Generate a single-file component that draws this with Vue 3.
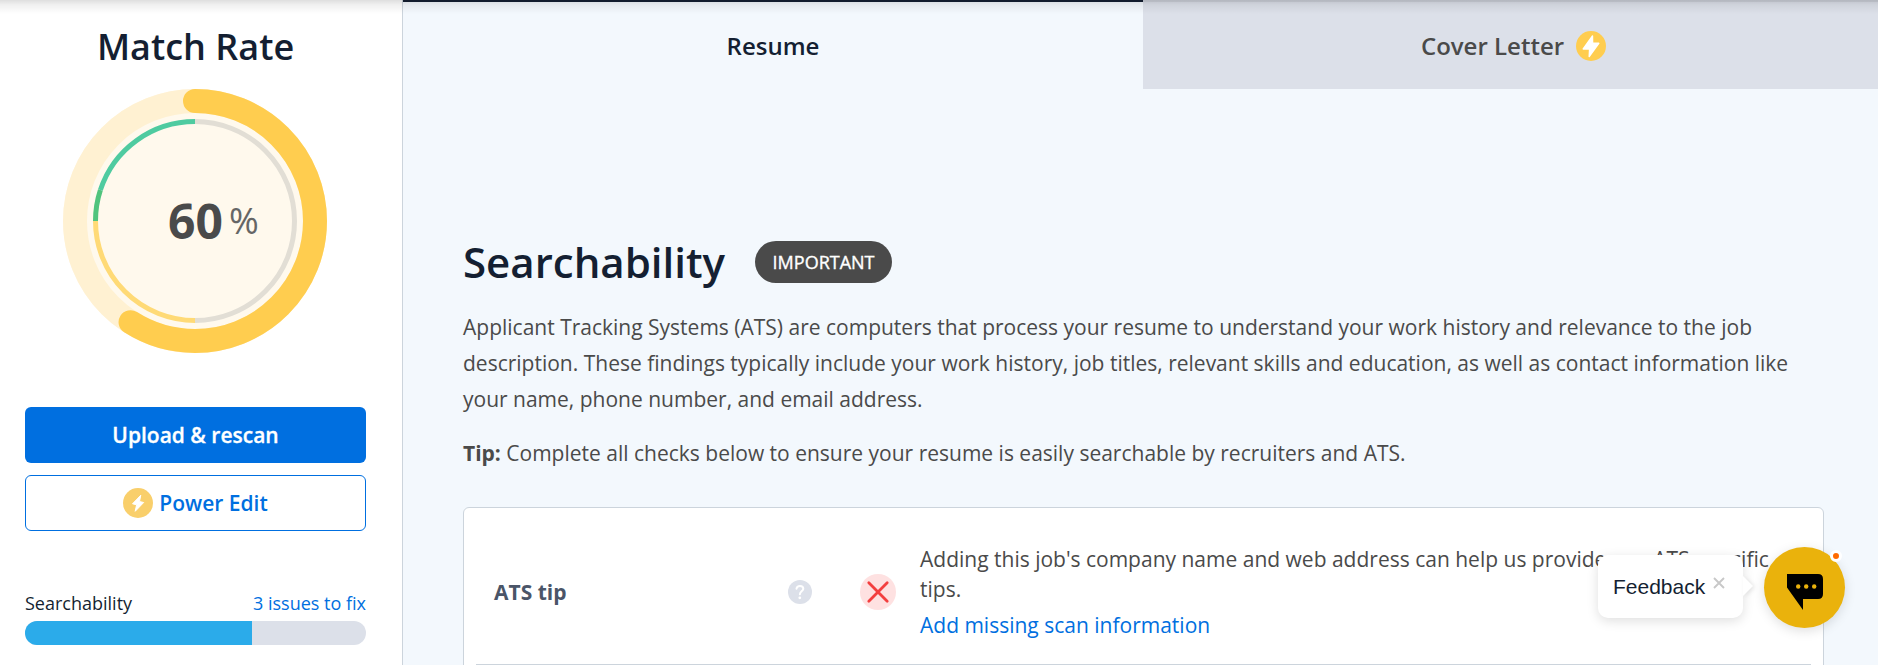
<script setup>
const matchRate = 60
const checksPassed = 66.6
const ring = 2 * Math.PI * 120
const ringLength = ring * 0.59
</script>

<template>
  <div class="page">
    <aside class="sidebar">
      <h2 class="rate-title"><span>Match Rate</span></h2>
      <div class="gauge">
        <svg width="264" height="264" viewBox="0 0 264 264">
          <circle cx="132" cy="132" r="132" fill="#fff9ed" />
          <circle cx="132" cy="132" r="120" fill="none" stroke="#fff1d2" stroke-width="24" />
          <path d="M132 32.5A99.5 99.5 0 0 1 132 231.500" fill="none" stroke="#e2ded5" stroke-width="5" />
          <path d="M132 231.500A99.500 99.500 0 0 1 32.500 132" fill="none" stroke="#ffda76" stroke-width="5" />
          <path d="M32.500 132A99.500 99.500 0 0 1 37.400 101" fill="none" stroke="#50c47d" stroke-width="5" />
          <path d="M37.400 101A99.500 99.500 0 0 1 132 32.500" fill="none" stroke="#4fcba0" stroke-width="5" />
          <circle cx="132" cy="132" r="120" fill="none" stroke="#ffcd4f" stroke-width="24" stroke-linecap="round"
            :stroke-dasharray="`${ringLength} ${ring}`" transform="rotate(-90 132 132)" />
        </svg>
        <div class="gauge-label"><b>{{ matchRate }}</b><span>%</span></div>
      </div>
      <button class="btn primary"><span>Upload &amp; rescan</span></button>
      <button class="btn outline">
        <svg width="30" height="30" viewBox="0 0 30 30">
          <circle cx="15" cy="15" r="15" fill="#f9cf6b" />
          <path d="M17.800 7.200L9.500 15.800L13.600 16.800L12.200 23.300L20.700 14.500L16.500 13.500Z" fill="#fff" stroke="#fff" stroke-width="1" stroke-linejoin="round" />
        </svg>
        <span>Power Edit</span>
      </button>
      <div class="metric">
        <span class="metric-name">Searchability</span>
        <a class="metric-link">3 issues to fix</a>
      </div>
      <div class="bar"><div class="bar-fill" :style="{ width: checksPassed + '%' }"></div></div>
    </aside>

    <main class="main">
      <nav class="tabs">
        <div class="tab active"><span>Resume</span></div>
        <div class="tab locked">
          <span>Cover Letter</span>
          <svg width="30" height="30" viewBox="0 0 30 30">
            <circle cx="15" cy="15" r="15" fill="#ffcd4f" />
            <path d="M16.500 5L7.200 18H13.600L13.200 25.500L22.800 12.300H16.600Z" fill="#fff" stroke="#fff" stroke-width="1.400" stroke-linejoin="round" />
          </svg>
        </div>
      </nav>
      <section class="content">
        <header class="heading">
          <h1><span>Searchability</span></h1>
          <span class="pill"><span>IMPORTANT</span></span>
        </header>
        <p class="intro">Applicant Tracking Systems (ATS) are computers that process your resume to understand your work history and relevance to the job<br>description. These findings typically include your work history, job titles, relevant skills and education, as well as contact information like<br>your name, phone number, and email address.</p>
        <p class="tip"><b>Tip:</b> Complete all checks below to ensure your resume is easily searchable by recruiters and ATS.</p>
        <div class="card">
          <div class="row">
            <span class="row-name">ATS tip</span>
            <svg class="help" width="24" height="24" viewBox="0 0 24 24">
              <circle cx="12" cy="12" r="12" fill="#dce0e9" />
              <path d="M8.500 8.700C8.800 6.800 10.100 5.900 12 5.900C14 5.900 15.300 7 15.300 8.700C15.300 10.900 12.100 11.200 11.900 14.300" fill="none" stroke="#fff" stroke-width="2" stroke-linecap="round" />
              <circle cx="11.800" cy="17.800" r="1.400" fill="#fff" />
            </svg>
            <svg class="fail" width="36" height="36" viewBox="0 0 36 36">
              <circle cx="18" cy="18" r="18" fill="#fee1e1" />
              <path d="M8.800 8.800L27.200 27.200M27.200 8.800L8.800 27.200" stroke="#f33f3f" stroke-width="2.800" stroke-linecap="round" />
            </svg>
            <div class="row-text">
              <p>Adding this job's company name and web address can help us provide you ATS-specific<br>tips.</p>
              <a>Add missing scan information</a>
            </div>
          </div>
        </div>
      </section>
    </main>

    <div class="top-shadow"></div>

    <div class="feedback">
      <span>Feedback</span>
      <svg width="12" height="12" viewBox="0 0 12 12"><path d="M1 1L11 11M11 1L1 11" stroke="#c8c8c8" stroke-width="1.900" /></svg>
    </div>
    <div class="chat">
      <svg width="36" height="36" viewBox="0 0 36 36">
        <path d="M0 0H31Q36 0 36 5V20Q36 25 31 25H16V36L0 13.500Z" fill="#000" />
        <circle cx="11.200" cy="12.500" r="2.200" fill="#eab20c" />
        <circle cx="19.200" cy="12.500" r="2.200" fill="#eab20c" />
        <circle cx="27.200" cy="12.500" r="2.200" fill="#eab20c" />
      </svg>
      <i class="dot"></i>
    </div>
  </div>
</template>

<style>
html, body { margin: 0; overflow: hidden; }
</style>

<style scoped>
* { box-sizing: border-box; }
.page {
  position: relative;
  display: flex;
  width: 1878px;
  height: 665px;
  overflow: hidden;
  background: #f3f8fd;
  color: #4a4a4a;
  font-family: "Open Sans", "Noto Sans", sans-serif;
}
h1, h2, p { margin: 0; }
.sidebar {
  width: 403px;
  flex: none;
  padding: 0 36px 0 25px;
  background: #fff;
  border-right: 1px solid #ccd4dc;
}
.rate-title {
  height: 89px;
  padding-top: 22px;
  line-height: 49px;
  font-size: 36px;
  font-weight: 600;
  text-align: center;
  color: #141f32;
}
.gauge {
  position: relative;
  width: 264px;
  height: 264px;
  margin: 0 0 54px 38px;
}
.gauge svg { display: block; }
.gauge-label {
  position: absolute;
  left: 105px;
  top: 99px;
  display: flex;
  line-height: 66px;
}
.gauge-label b { font-size: 48px; font-weight: 700; }
.gauge-label span { font-size: 36px; color: #666; margin-left: 6px; }
.btn {
  display: flex;
  align-items: center;
  justify-content: center;
  width: 341px;
  height: 56px;
  padding: 0;
  border: 0;
  border-radius: 6px;
  font: 600 21px "Open Sans", sans-serif;
}
.primary { background: #006fe0; color: #fff; -webkit-text-stroke: 0.3px #fff; }
.outline {
  margin-top: 12px;
  gap: 6px;
  border: 1px solid #006fe0;
  background: #fff;
  color: #006fe0;
}
.metric {
  display: flex;
  justify-content: space-between;
  width: 341px;
  margin-top: 58px;
  line-height: 28px;
  font-size: 18px;
}
.metric-name { color: #141f32; }
.metric-link { color: #006fe0; }
.bar {
  width: 341px;
  height: 24px;
  margin-top: 4px;
  border-radius: 12px;
  background: #dce0e9;
  overflow: hidden;
}
.bar-fill { height: 100%; background: #2babea; }
.main { flex: 1; }
.tabs { display: flex; height: 89px; }
.tab {
  display: flex;
  flex: 1;
  align-items: center;
  justify-content: center;
  gap: 12px;
  padding-top: 1px;
  border-top: 2px solid #ced2db;
  background: #dce0e9;
  font-size: 24px;
  font-weight: 600;
}
.tab.active {
  flex: none;
  width: 740px;
  background: none;
  border-top-color: #141f32;
  color: #141f32;
}
.tab.locked { padding-left: 6px; }
.tab span { margin-top: -2px; }
.content { width: 1361px; margin-left: 60px; }
.heading {
  display: flex;
  align-items: center;
  height: 72px;
  margin-top: 137px;
}
h1 {
  font-size: 42px;
  font-weight: 600;
  line-height: 72px;
  color: #141f32;
}
.pill {
  display: flex;
  align-items: center;
  justify-content: center;
  width: 137px;
  height: 42px;
  margin-left: 30px;
  border-radius: 21px;
  background: #4a4a4a;
  color: #fff;
  font-size: 18px;
  font-weight: 400;
  -webkit-text-stroke: 0.35px #fff;
}
.intro, .tip { font-size: 21px; line-height: 36px; white-space: nowrap; }
.intro { margin-top: 11px; }
.tip { margin-top: 18px; }
.card {
  height: 180px;
  margin-top: 36px;
  padding: 0 12px;
  border: 1px solid #ccd4dc;
  border-radius: 6px;
  background: #fff;
}
.row {
  display: flex;
  align-items: center;
  height: 157px;
  padding: 12px 0 0 18px;
  border-bottom: 1px solid #ccd4dc;
}
.row-name {
  width: 294px;
  font-size: 21px;
  font-weight: 700;
  color: #4a5568;
}
.fail { margin-left: 48px; }
.row-text {
  margin-left: 24px;
  padding-top: 6px;
  font-size: 21px;
  line-height: 30px;
  white-space: nowrap;
}
.row-text a { display: block; line-height: 42px; color: #006fe0; }
.top-shadow {
  position: absolute;
  inset: 0 0 auto;
  height: 14px;
  background: linear-gradient(rgba(0, 0, 0, 0.13), rgba(0, 0, 0, 0.06) 35%, rgba(0, 0, 0, 0));
}
.feedback {
  position: absolute;
  left: 1598px;
  top: 555px;
  display: flex;
  width: 145px;
  height: 63px;
  padding: 20px 0 0 15px;
  border-radius: 10px;
  background: #fff;
  box-shadow: 0 3px 12px rgba(0, 0, 0, 0.13);
  color: #141f32;
  font: 21px/24px "Liberation Sans", sans-serif;
}
.feedback svg { margin: 2px 0 0 8px; }
.feedback::after {
  content: "";
  position: absolute;
  left: 100%;
  top: 21px;
  border: 10px solid transparent;
  border-left-color: #fff;
  border-right: 0;
  filter: drop-shadow(2px 1px 2px rgba(0, 0, 0, 0.1));
}
.chat {
  position: absolute;
  left: 1764px;
  top: 547px;
  width: 81px;
  height: 81px;
  padding: 27px 0 0 23px;
  border-radius: 50%;
  background: #eab20c;
  box-shadow: 0 3px 12px rgba(0, 0, 0, 0.13);
}
.dot {
  position: absolute;
  left: 66px;
  top: 3px;
  width: 12px;
  height: 12px;
  border: 3px solid #fff;
  border-radius: 50%;
  background: #ff6a00;
}
</style>
